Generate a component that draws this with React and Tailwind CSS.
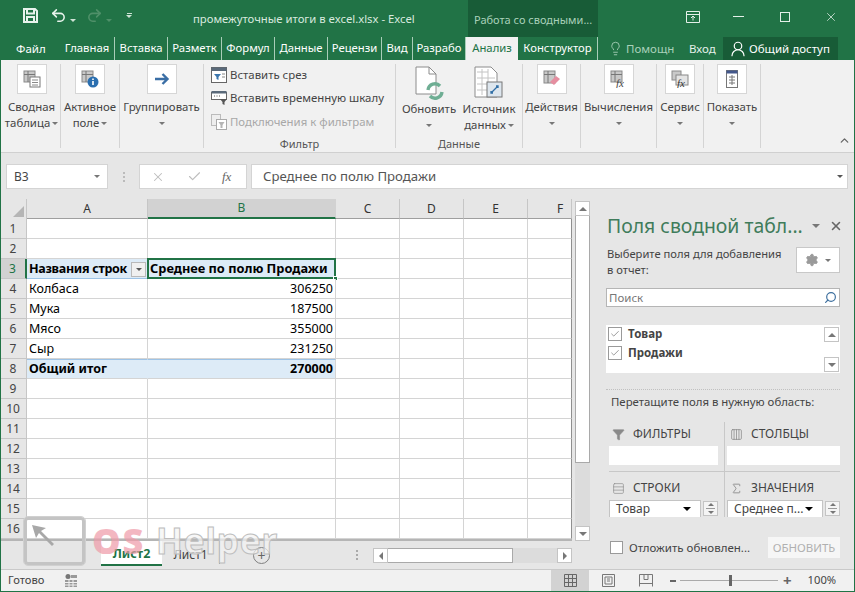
import { Undo2, Redo2, LightbulbIcon, UserRound, Settings, Search, ChevronUp, X, Check, Filter, Columns4, Rows3, Sigma } from "lucide-react";

const FONT = "font-['Noto_Sans','Open_Sans',sans-serif]";

function Caret({ className = "border-t-[#777]" }) {
  return <span className={`inline-block h-0 w-0 border-x-[3px] border-t-[3px] border-x-transparent ${className}`} />;
}

function Sep() {
  return <div className="my-[4px] w-px self-stretch bg-[#d4d4d4]" />;
}

function TabLabel({ children, w, sep = true }) {
  return (
    <div className={`flex h-[23px] items-center justify-center text-[11.3px] text-white ${sep ? "border-r border-[#a9cdb8]" : ""} ${w}`}>
      {children}
    </div>
  );
}

function IconBox({ children }) {
  return (
    <div className="flex h-[30px] w-[30px] items-center justify-center border border-[#d6d6d6] bg-white">
      {children}
    </div>
  );
}

function SheetGlyph() {
  return (
    <svg width="18" height="18" viewBox="0 0 18 18">
      <rect x="1" y="1" width="11" height="11" fill="#c9c9c9" stroke="#8a8a8a" />
      <path d="M1 4.5h11M5 1v11" stroke="#777" />
      <rect x="7" y="7" width="10" height="10" fill="#fff" stroke="#777" />
      <path d="M9 10h6M9 12.5h6M9 15h6" stroke="#888" />
    </svg>
  );
}

function BigButton({ w, icon, line1, line2 }) {
  return (
    <div className={`flex flex-col items-center pt-[4px] ${w}`}>
      <IconBox>{icon}</IconBox>
      <div className="mt-[5px] whitespace-nowrap text-[11.4px] leading-[16px] text-[#444]">{line1}</div>
      <div className="flex h-[16px] items-center gap-[2px] whitespace-nowrap text-[11.4px] leading-[16px] text-[#444]">
        {line2}
        <Caret />
      </div>
    </div>
  );
}

function Ribbon() {
  return (
    <div className="flex h-[93px] border-b border-[#d0d0d0] bg-[#f1f1f1] pl-[3px]">
      <BigButton w="w-[57px]" line1="Сводная" line2="таблица" icon={<SheetGlyph />} />
      <Sep />
      <BigButton
        w="w-[58px]"
        line1="Активное"
        line2="поле"
        icon={
          <svg width="18" height="18" viewBox="0 0 18 18">
            <rect x="1" y="1" width="11" height="11" fill="#c9c9c9" stroke="#8a8a8a" />
            <path d="M1 4.5h11M5 1v11" stroke="#777" />
            <circle cx="12" cy="12" r="5.5" fill="#2a6fb0" />
            <path d="M12 8.5v1.4M12 11v4" stroke="#fff" strokeWidth="1.6" />
          </svg>
        }
      />
      <Sep />
      <BigButton
        w="w-[83px]"
        line1="Группировать"
        line2=""
        icon={
          <svg width="16" height="14" viewBox="0 0 16 14">
            <path d="M1 7h12M8.5 2l5 5-5 5" fill="none" stroke="#3a6ea5" strokeWidth="2.4" />
          </svg>
        }
      />
      <Sep />
      <div className="flex w-[191px] flex-col pl-[7px] pt-[4px]">
        <div className="flex h-[22px] items-center gap-[3px] text-[11.4px] text-[#444]">
          <svg width="16" height="16" viewBox="0 0 16 16">
            <rect x="0.5" y="0.5" width="15" height="15" fill="#fff" stroke="#666" />
            <rect x="0.5" y="0.5" width="15" height="3.5" fill="#5a6a7a" />
            <path d="M3 7h7l-2.5 3v3l-2-1v-2z" fill="#3b76ad" />
            <path d="M11 7h3M11 10h3" stroke="#888" />
          </svg>
          Вставить срез
        </div>
        <div className="flex h-[24px] items-center gap-[3px] text-[11.4px] text-[#444]">
          <svg width="16" height="16" viewBox="0 0 16 16">
            <rect x="0.5" y="2.5" width="15" height="7" fill="#fff" stroke="#666" />
            <rect x="0.5" y="1" width="15" height="2.5" fill="#5a6a7a" />
            <path d="M3 6h1M5.5 6h1M8 6h1" stroke="#555" />
            <path d="M9 9h7l-2.5 3v3l-2-1v-2z" fill="#555" />
          </svg>
          Вставить временную шкалу
        </div>
        <div className="flex h-[23px] items-center gap-[3px] text-[11.4px] text-[#a8a8a8]">
          <svg width="16" height="16" viewBox="0 0 16 16">
            <rect x="0.5" y="0.5" width="9" height="11" fill="#eee" stroke="#bbb" />
            <rect x="5.5" y="5.5" width="10" height="10" fill="#fff" stroke="#aaa" />
            <path d="M7.5 8h6l-2 3v3h-2v-3z" fill="#b5b5b5" />
          </svg>
          Подключения к фильтрам
        </div>
        <div className="-ml-[7px] mt-[4px] text-center text-[11px] leading-[14px] text-[#555]">Фильтр</div>
      </div>
      <Sep />
      <div className="flex w-[126px] flex-col">
        <div className="flex flex-1">
          <div className="flex w-[66px] flex-col items-center">
            <svg width="32" height="36" viewBox="0 0 32 36" className="mt-[6px]">
              <path d="M3 1h13l7 7v20H3z" fill="#fff" stroke="#8c8c8c" />
              <path d="M16 1v7h7" fill="none" stroke="#8c8c8c" />
              <path d="M15 24a7 7 0 0 1 12-4M29 26a7 7 0 0 1-12 4" fill="none" stroke="#6fae94" strokeWidth="3.4" />
            </svg>
            <div className="-mt-[1px] text-[11.4px] leading-[16px] text-[#444]">Обновить</div>
            <div className="flex h-[16px] items-center"><Caret /></div>
          </div>
          <div className="flex w-[54px] flex-col items-center">
            <svg width="30" height="36" viewBox="0 0 30 36" className="mt-[6px]">
              <path d="M1 1h16l6 6v24H1z" fill="#fff" stroke="#8c8c8c" />
              <path d="M3 6h11M3 12h18M3 18h18M3 24h18M8 3v26M14 3v26" stroke="#c4c4c4" />
              <rect x="13" y="16" width="15" height="15" fill="#dde6ee" stroke="#777" />
              <path d="M17 27l7-7M22 20h2v2M17 25v2h2" fill="none" stroke="#2f6ea5" strokeWidth="1.3" />
            </svg>
            <div className="-mt-[1px] text-[11.4px] leading-[16px] text-[#444]">Источник</div>
            <div className="flex h-[16px] items-center gap-[2px] text-[11.4px] text-[#444]">данных <Caret /></div>
          </div>
        </div>
        <div className="mb-[1px] text-center text-[11px] leading-[14px] text-[#555]">Данные</div>
      </div>
      <Sep />
      <BigButton
        w="w-[57px]"
        line1="Действия"
        line2=""
        icon={
          <svg width="18" height="18" viewBox="0 0 18 18">
            <rect x="1" y="1" width="11" height="12" fill="#c9c9c9" stroke="#8a8a8a" />
            <path d="M1 4.5h11M5 1v12" stroke="#777" />
            <path d="M7 12l6-6 4 3-6 6z" fill="#e58ea0" />
          </svg>
        }
      />
      <Sep />
      <BigButton
        w="w-[75px]"
        line1="Вычисления"
        line2=""
        icon={
          <svg width="18" height="18" viewBox="0 0 18 18">
            <rect x="1" y="1" width="11" height="11" fill="#c9c9c9" stroke="#8a8a8a" />
            <path d="M1 4.5h11M5 1v11" stroke="#777" />
            <text x="6" y="17" fontSize="11" fontStyle="italic" fontFamily="Liberation Serif" fill="#444">fx</text>
          </svg>
        }
      />
      <Sep />
      <BigButton
        w="w-[46px]"
        line1="Сервис"
        line2=""
        icon={
          <svg width="18" height="18" viewBox="0 0 18 18">
            <rect x="1" y="1" width="9" height="9" fill="#c9c9c9" stroke="#8a8a8a" />
            <rect x="5" y="5" width="12" height="10" fill="#e4e4e4" stroke="#888" />
            <text x="6" y="17" fontSize="11" fontStyle="italic" fontFamily="Liberation Serif" fill="#333">fx</text>
          </svg>
        }
      />
      <Sep />
      <BigButton
        w="w-[56px]"
        line1="Показать"
        line2=""
        icon={
          <svg width="12" height="18" viewBox="0 0 12 18">
            <rect x="0.5" y="0.5" width="11" height="17" fill="#fff" stroke="#777" />
            <rect x="0.5" y="0.5" width="11" height="3" fill="#44588c" />
            <path d="M3 7h6M3 10h6M3 13h6M6 5v10" stroke="#777" />
          </svg>
        }
      />
      <Sep />
      <div className="flex flex-1 items-end justify-end pb-[5px] pr-[4px]">
        <ChevronUp size={13} strokeWidth={2.4} className="text-[#666]" />
      </div>
    </div>
  );
}

function TitleBar() {
  return (
    <div className="flex h-[37px] items-center bg-[#217346] text-white">
      <div className="-mt-[6px] flex w-[187px] items-center pl-[23px]">
        <svg width="15" height="15" viewBox="0 0 15 15" className="text-[#e8f3ec]">
          <path d="M1 1h11l2 2v11H1zM4 1v4.5h7V1M4 14V9h7v5" fill="none" stroke="currentColor" strokeWidth="2" />
        </svg>
        <Undo2 size={17} strokeWidth={2.2} className="ml-[12px] text-[#e8f3ec]" />
        <span className="ml-[3px]"><Caret className="border-t-[#cfe3d6]" /></span>
        <Redo2 size={17} strokeWidth={2.2} className="ml-[10px] text-[#4f9069]" />
        <span className="ml-[3px]"><Caret className="border-t-[#4f9069]" /></span>
        <span className="ml-[14px] flex flex-col items-center gap-[1px]">
          <span className="h-px w-[5px] bg-[#cfe3d6]" />
          <Caret className="border-t-[#cfe3d6]" />
        </span>
      </div>
      <div className="w-[281px] pl-[6px] pt-[2px] text-[11.3px] text-[#d8e9df]">промежуточные итоги в excel.xlsx - Excel</div>
      <div className="flex h-full w-[130px] items-center bg-[#185c37] pl-[6px] pt-[4px] text-[11px] text-[#a9d1ba]">Работа со сводными...</div>
      <div className="-mt-[4px] flex flex-1 items-center text-[#e4f0e9]">
        <svg width="14" height="12" viewBox="0 0 14 12" className="ml-[88px]">
          <path d="M.5.5h13v11H.5zM.5 3.5h13M7 9.5V5M5 7l2-2 2 2" fill="none" stroke="currentColor" />
        </svg>
        <span className="ml-[33px] h-px w-[11px] bg-current" />
        <span className="ml-[36px] h-[10px] w-[10px] border border-current" />
        <X size={14} strokeWidth={1.3} className="ml-[34px]" />
      </div>
    </div>
  );
}

function TabsRow() {
  return (
    <div className="flex h-[23px] items-end bg-[#217346]">
      <div className="flex h-[23px] w-[60px] items-center pl-[16px] text-[11.5px] text-white">Файл</div>
      <TabLabel w="w-[55px]">Главная</TabLabel>
      <TabLabel w="w-[53px]">Вставка</TabLabel>
      <TabLabel w="w-[54px]">Разметк</TabLabel>
      <TabLabel w="w-[53px]">Формул</TabLabel>
      <TabLabel w="w-[53px]">Данные</TabLabel>
      <TabLabel w="w-[54px]">Рецензи</TabLabel>
      <TabLabel w="w-[31px]">Вид</TabLabel>
      <TabLabel w="w-[53px]">Разрабо</TabLabel>
      <div className="flex h-[23px] w-[52px] items-center justify-center bg-[#f1f1f1] text-[11.3px] text-[#217346]">Анализ</div>
      <TabLabel w="w-[80px]">Конструктор</TabLabel>
      <div className="ml-[10px] flex h-[23px] w-[74px] items-center gap-[3px] text-[11.5px] text-[#a9d1ba]">
        <LightbulbIcon size={15} strokeWidth={1.4} />
        Помощн
      </div>
      <div className="ml-[7px] flex h-[23px] w-[34px] items-center text-[11.5px] text-[#e4f0e9]">Вход</div>
      <div className="flex h-[23px] w-[115px] items-center gap-[2px] bg-[#185c37] pl-[6px] text-[11.5px] text-white">
        <UserRound size={18} strokeWidth={1.6} />
        Общий доступ
      </div>
    </div>
  );
}

function FormulaBar() {
  return (
    <div className="flex h-[46px] items-center bg-[#e6e6e6] pl-[6px] pr-[7px] pt-[1px]">
      <div className="flex h-[25px] w-[102px] items-center justify-between border border-[#d4d4d4] bg-white px-[7px] text-[12px] text-[#444]">
        B3
        <Caret className="border-t-[#777]" />
      </div>
      <div className="ml-[14px] flex w-[3px] flex-col items-center gap-[2px]">
        <span className="h-[2px] w-[2px] bg-[#bbb]" />
        <span className="h-[2px] w-[2px] bg-[#bbb]" />
        <span className="h-[2px] w-[2px] bg-[#bbb]" />
      </div>
      <div className="ml-[14px] flex h-[25px] w-[108px] items-center border border-[#d4d4d4] bg-white text-[#bdbdbd]">
        <X size={14} strokeWidth={1.8} className="ml-[11px]" />
        <Check size={15} strokeWidth={1.8} className="ml-[22px]" />
        <span className="ml-[20px] font-['Liberation_Serif',serif] text-[13px] italic text-[#666]">fx</span>
      </div>
      <div className="ml-[4px] flex h-[25px] flex-1 items-center justify-between border border-[#d4d4d4] bg-white pl-[11px] pr-[4px] text-[13.2px] text-[#555]">
        Среднее по полю Продажи
        <Caret className="border-t-[#555]" />
      </div>
    </div>
  );
}

const COLS = ["w-[121px]", "w-[188px]", "w-[64px]", "w-[64px]", "w-[64px]", "w-[44px]"];

const ROWS = [
  {},
  {},
  { head: true },
  { a: "Колбаса", b: "306250" },
  { a: "Мука", b: "187500" },
  { a: "Мясо", b: "355000" },
  { a: "Сыр", b: "231250" },
  { a: "Общий итог", b: "270000", total: true },
  {}, {}, {}, {}, {}, {}, {}, {},
];

function Grid() {
  return (
    <div className="flex flex-col">
      <div className="flex h-[20px] bg-[#e6e6e6]">
        <div className="flex h-[20px] w-[27px] items-end justify-end border-r border-[#c6c6c6] p-[2px]">
          <span className="h-0 w-0 border-b-[11px] border-l-[11px] border-b-[#b5b5b5] border-l-transparent" />
        </div>
        {["A", "B", "C", "D", "E", "F"].map((c, i) => (
          <div
            key={c}
            className={`flex h-[20px] items-center border-r text-[12px] ${COLS[i]} ${c === "F" ? "justify-start pl-[29px]" : "justify-center"} ${
              c === "B"
                ? "border-[#d2d2d2] border-b-2 border-b-[#217346] bg-[#d2d2d2] text-[#217346]"
                : "border-[#c6c6c6] border-b border-b-[#9f9f9f] text-[#333]"
            }`}
          >
            {c}
          </div>
        ))}
      </div>
      {ROWS.map((r, i) => (
        <div key={i} className="flex h-[20px]">
          <div
            className={`flex w-[27px] items-center justify-center border-b border-r border-[#c6c6c6] pt-[1px] text-[12px] ${
              r.head ? "border-r-2 border-r-[#217346] bg-[#d2d2d2] text-[#217346]" : "bg-[#e6e6e6] text-[#444]"
            }`}
          >
            {i + 1}
          </div>
          <div
            className={`flex items-center justify-between overflow-hidden whitespace-nowrap border-b border-r border-[#d4d4d4] pl-[2px] text-[12.5px] text-black ${COLS[0]} ${
              r.head || r.total ? "bg-[#ddebf7] pt-[1px] font-bold" : "bg-white pt-[2px]"
            } ${r.total ? "border-r-[#ddebf7] border-t border-t-[#9dc3e6]" : ""} ${r.head ? "border-b-[#9dc3e6] tracking-[-0.3px]" : ""}`}
          >
            {r.head ? "Названия строк" : r.a}
            {r.head && (
              <span className="mr-[1px] flex h-[15px] w-[15px] items-center justify-center border border-[#b9b9b9] bg-[#f0f0f0]">
                <Caret className="border-t-[#555]" />
              </span>
            )}
          </div>
          <div
            className={`relative flex items-center overflow-visible whitespace-nowrap border-b border-r border-[#d4d4d4] px-[2px] text-black ${COLS[1]} ${
              r.head ? "bg-[#ddebf7] pt-[1px] text-[12.8px] font-bold" : r.total ? "justify-end border-t border-t-[#9dc3e6] bg-[#ddebf7] pt-[1px] text-[12.5px] font-bold" : "justify-end bg-white pt-[2px] text-[12.5px]"
            }`}
          >
            {r.head ? "Среднее по полю Продажи" : r.b}
            {r.head && (
              <>
                <span className="absolute -bottom-px -left-px -right-px -top-px border-2 border-[#217346]" />
                <span className="absolute -bottom-[3px] -right-[3px] h-[5px] w-[5px] border border-white bg-[#217346]" />
              </>
            )}
          </div>
          {COLS.slice(2).map((w, j) => (
            <div key={j} className={`border-b border-r border-[#d4d4d4] bg-white ${w} ${j === 3 ? "border-r-[#8f8f8f]" : ""}`} />
          ))}
        </div>
      ))}
      <div className="h-[2px] w-[572px] bg-[#b5b5b5]" />
    </div>
  );
}

function ArrowBtn({ dir }) {
  const tri = {
    up: "border-x-[4px] border-b-[4px] border-x-transparent border-b-[#777]",
    down: "border-x-[4px] border-t-[4px] border-x-transparent border-t-[#777]",
    left: "border-y-[4px] border-r-[4px] border-y-transparent border-r-[#777]",
    right: "border-y-[4px] border-l-[4px] border-y-transparent border-l-[#777]",
  }[dir];
  return (
    <div className="flex h-[15px] w-[15px] shrink-0 items-center justify-center border border-[#c4c4c4] bg-white">
      <span className={`h-0 w-0 ${tri}`} />
    </div>
  );
}

function VScroll() {
  return (
    <div className="ml-[3px] flex h-[342px] w-[15px] flex-col pt-[2px]">
      <ArrowBtn dir="up" />
      <div className="h-[247px] border-x border-b border-[#a9a9a9] bg-white" />
      <div className="flex-1 bg-[#dcdcdc]" />
      <ArrowBtn dir="down" />
    </div>
  );
}

function SheetTabs() {
  return (
    <div className="flex h-[28px] items-start bg-[#e6e6e6]">
      <div className="w-[101px]" />
      <div className="flex h-[25px] w-[61px] items-center justify-center border-b-2 border-[#217346] bg-white pt-[3px] text-[12.5px] font-bold text-[#217346]">Лист2</div>
      <div className="flex h-[23px] w-[58px] items-center justify-center border-r border-[#9a9a9a] pt-[5px] text-[12px] text-[#444]">Лист1</div>
      <div className="ml-[33px] mt-[6px] flex h-[17px] w-[17px] items-center justify-center rounded-full border border-[#808080] text-[14px] leading-none text-[#666]">+</div>
      <div className="ml-[86px] mt-[9px] flex flex-col gap-[2px]">
        <span className="h-[2px] w-[2px] bg-[#aaa]" />
        <span className="h-[2px] w-[2px] bg-[#aaa]" />
        <span className="h-[2px] w-[2px] bg-[#aaa]" />
      </div>
      <div className="ml-[15px] mt-[7px] flex h-[15px] w-[199px]">
        <ArrowBtn dir="left" />
        <div className="w-[125px] border-y border-r border-[#a9a9a9] bg-white" />
        <div className="flex-1 bg-[#dcdcdc]" />
        <ArrowBtn dir="right" />
      </div>
    </div>
  );
}

function FieldArea({ icon, label, children }) {
  return (
    <div className="flex flex-col">
      <div className="flex h-[24px] items-center gap-[6px] text-[12px] text-[#444]">
        <span className="flex w-[18px] justify-center text-[#8a8a8a]">{icon}</span>
        {label}
      </div>
      {children}
    </div>
  );
}

function FieldSelect({ text }) {
  return (
    <div className="flex items-center gap-[2px]">
      <div className="flex h-[17px] flex-1 items-center justify-between overflow-hidden border-x border-t border-[#c4c4c4] bg-white pl-[6px] pr-[9px] text-[12px] text-[#444]">
        {text}
        <span className="h-0 w-0 border-x-[4px] border-t-[4px] border-x-transparent border-t-black" />
      </div>
      <div className="flex h-[15px] w-[15px] flex-col items-center justify-center gap-[2px] border border-[#c4c4c4] bg-[#f4f4f4]">
        <Caret className="rotate-180 border-t-[#777]" />
        <span className="h-px w-[9px] bg-[#999]" />
        <Caret className="border-t-[#777]" />
      </div>
    </div>
  );
}

function PivotPanel() {
  return (
    <div className="flex h-[370px] w-[258px] flex-col bg-[#e6e6e6] pl-[9px] pr-[15px]">
      <div className="flex h-[42px] items-center justify-between pl-[1px] pt-[12px]">
        <span className="whitespace-nowrap text-[19.4px] text-[#3f7c5b]">Поля сводной табл...</span>
        <span className="-mr-[3px] flex items-center gap-[9px] text-[#666]">
          <span className="h-0 w-0 border-x-[4px] border-t-[4px] border-x-transparent border-t-[#777]" />
          <X size={14} strokeWidth={2.6} />
        </span>
      </div>
      <div className="mt-[5px] flex items-start justify-between">
        <div className="pl-[1px] text-[11.2px] leading-[16px] text-[#444]">Выберите поля для добавления<br />в отчет:</div>
        <div className="mt-[1px] flex h-[26px] w-[44px] items-center justify-center gap-[6px] border border-[#c8c8c8] bg-white text-[#9a9a9a]">
          <Settings size={14} fill="#9a9a9a" strokeWidth={1.5} />
          <Caret />
        </div>
      </div>
      <div className="mt-[10px] flex h-[19px] w-[234px] items-center justify-between border border-[#b5b5b5] bg-white pl-[2px] pr-[2px] text-[11.5px] text-[#777]">
        Поиск
        <Search size={13} strokeWidth={2.2} className="-scale-x-100 text-[#3d6f9e]" />
      </div>
      <div className="mt-[18px] flex h-[48px] w-[234px] justify-between bg-white pl-[2px] pr-[1px]">
        <div className="-mt-[1px]">
          {["Товар", "Продажи"].map((f) => (
            <div key={f} className="flex h-[19px] items-center gap-[6px] text-[11.5px] font-bold text-[#444]">
              <span className="flex h-[14px] w-[14px] items-center justify-center border border-[#9a9a9a]">
                <Check size={10} strokeWidth={1.8} className="text-[#777]" />
              </span>
              {f}
            </div>
          ))}
        </div>
        <div className="flex w-[15px] flex-col pt-[2px]">
          <ArrowBtn dir="up" />
          <div className="h-[15px]" />
          <ArrowBtn dir="down" />
        </div>
      </div>
      <div className="mt-[16px] border-t border-dotted border-[#c0c0c0]" />
      <div className="mt-[4px] pl-[5px] text-[11.4px] leading-[16px] text-[#444]">Перетащите поля в нужную область:</div>
      <div className="mt-[12px] grid grid-cols-[116px_115px] pl-[3px]">
        <div className="border-r border-[#c8c8c8] pr-[6px] pb-[6px]">
          <FieldArea icon={<Filter size={13} fill="#8a8a8a" strokeWidth={1} />} label="ФИЛЬТРЫ">
            <div className="h-[19px] bg-white" />
          </FieldArea>
        </div>
        <div className="pl-[2px] pb-[6px]">
          <FieldArea icon={<Columns4 size={13} strokeWidth={1.4} />} label="СТОЛБЦЫ">
            <div className="h-[19px] bg-white" />
          </FieldArea>
        </div>
        <div className="border-r border-t border-[#c8c8c8] pr-[6px] pt-[4px]">
          <FieldArea icon={<Rows3 size={13} strokeWidth={1.2} />} label="СТРОКИ">
            <FieldSelect text="Товар" />
          </FieldArea>
        </div>
        <div className="border-t border-[#c8c8c8] pl-[2px] pt-[4px]">
          <FieldArea icon={<Sigma size={13} strokeWidth={1.6} />} label="ЗНАЧЕНИЯ">
            <FieldSelect text="Среднее п..." />
          </FieldArea>
        </div>
      </div>
      <div className="mt-[20px] flex items-center justify-between">
        <div className="flex items-center gap-[6px] pl-[4px] text-[11.5px] text-[#444]">
          <span className="h-[13px] w-[13px] border border-[#9a9a9a] bg-white" />
          Отложить обновлен...
        </div>
        <div className="flex h-[21px] w-[72px] items-center justify-center bg-[#f6f6f6] text-[11.5px] text-[#b0b0b0]">ОБНОВИТЬ</div>
      </div>
    </div>
  );
}

function StatusBar() {
  return (
    <div className="flex h-[22px] items-center border-t border-[#c9c9c9] bg-[#f1f1f1] text-[11.2px] text-[#444]">
      <span className="ml-[8px] w-[57px]">Готово</span>
      <svg width="12" height="13" viewBox="0 0 12 13">
        <circle cx="3" cy="2.5" r="2.5" fill="#777" />
        <path d="M6 1h6v3H6zM0 6h12v7H0z" fill="#999" />
        <path d="M0 8.5h12M0 11h12M4 6v7M8 6v7" stroke="#f1f1f1" />
      </svg>
      <div className="ml-[474px] flex h-full w-[38px] items-center justify-center bg-[#d2d2d2]">
        <svg width="13" height="13" viewBox="0 0 13 13">
          <path d="M.5.5h12v12H.5zM.5 4.5h12M.5 8.5h12M4.5.5v12M8.5.5v12" fill="none" stroke="#666" />
        </svg>
      </div>
      <svg width="13" height="13" viewBox="0 0 13 13" className="ml-[13px]">
        <path d="M.5.5h12v12H.5zM3 3h7v7H3zM5 5h3M5 7h3" fill="none" stroke="#777" />
      </svg>
      <svg width="14" height="13" viewBox="0 0 14 13" className="ml-[24px]">
        <path d="M.5 12.5v-12h13v12M.5 9.5h13M5 .5v5h4v-5" fill="none" stroke="#777" />
      </svg>
      <span className="ml-[17px] h-[2px] w-[6px] bg-[#666]" />
      <div className="relative ml-[4px] h-px w-[98px] bg-[#aaa]">
        <span className="absolute -top-[5px] left-[49px] h-[11px] w-[3px] bg-[#666]" />
      </div>
      <span className="ml-[5px] text-[15px] font-bold leading-none text-[#666]">+</span>
      <span className="ml-[16px]">100%</span>
    </div>
  );
}

function Watermark() {
  return (
    <div className="pointer-events-none absolute left-[23px] top-[517px] flex items-start">
      <div className="h-[48px] w-[61px] rounded-[4px] border-[3px] border-[#c4c4c4] p-[3px] outline outline-1 outline-[#d0d0d0]">
        <svg width="28" height="28" viewBox="0 0 28 28">
          <path d="M2 2l4 13 3-5 13 13 2-2L11 8l5-3z" fill="#a8a8a8" />
        </svg>
      </div>
      <span className="ml-[7px] mt-[6px] text-[36px] font-black leading-[36px] tracking-wider text-[#ef9aa8] opacity-70">OS</span>
      <span className="ml-[11px] mt-[6px] text-[35px] font-bold leading-[36px] tracking-wide text-[#f4f4f4]/70 [-webkit-text-stroke:1px_#bdbdbd]">Helper</span>
    </div>
  );
}

export default function App() {
  return (
    <div className={`relative h-[592px] w-[855px] overflow-hidden border-x border-b border-[#217346] bg-[#e6e6e6] ${FONT}`}>
      <div className="-mx-px">
        <TitleBar />
        <TabsRow />
        <Ribbon />
        <FormulaBar />
        <div className="flex h-[370px]">
          <div className="flex w-[597px] flex-col">
            <div className="flex h-[342px]">
              <Grid />
              <VScroll />
            </div>
            <SheetTabs />
          </div>
          <PivotPanel />
        </div>
        <StatusBar />
      </div>
      <Watermark />
    </div>
  );
}
